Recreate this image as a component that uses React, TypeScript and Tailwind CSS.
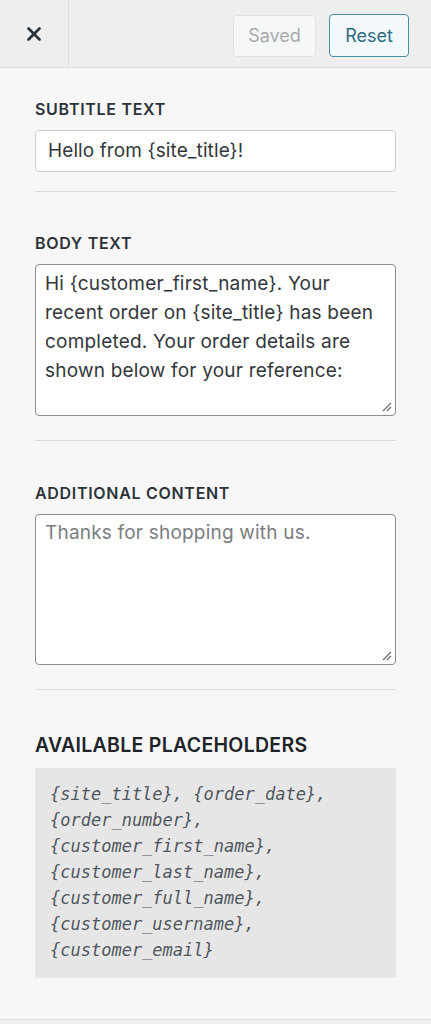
import { X } from 'lucide-react';

const placeholders = [
  '{site_title}, {order_date},',
  '{order_number},',
  '{customer_first_name},',
  '{customer_last_name},',
  '{customer_full_name},',
  '{customer_username},',
  '{customer_email}',
];

function ResizeGrip() {
  return (
    <svg
      className="absolute right-[3px] bottom-[3px] text-[#6b6e72]"
      width="10"
      height="10"
      viewBox="0 0 10 10"
      aria-hidden="true"
    >
      <path d="M1 9 L9 1 M5 9 L9 5" stroke="currentColor" strokeWidth="1.2" fill="none" />
    </svg>
  );
}

function Label({ children }: { children: React.ReactNode }) {
  return (
    <div className="h-5 text-[16px] leading-5 font-semibold tracking-[0.7px] text-[#2c3338] uppercase">
      {children}
    </div>
  );
}

function Divider() {
  return <div className="h-px bg-[#dcdcde]" />;
}

export default function App() {
  return (
    <div className="w-[431px] h-[1024px] flex flex-col bg-[#f7f7f7] font-['Inter','Liberation_Sans',sans-serif] overflow-hidden">
      {/* top bar */}
      <header className="h-[68px] shrink-0 flex items-stretch bg-[#eeeeee] border-b border-[#dddddd]">
        <button
          type="button"
          aria-label="Close"
          className="w-[69px] flex items-center justify-center border-r border-[#dddddd] text-[#2c3338]"
        >
          <X size={22} strokeWidth={3} />
        </button>
        <div className="flex-1 flex items-center justify-end gap-[13px] pr-[22px] pt-[4px]">
          <button
            type="button"
            className="w-[83px] h-[42px] rounded-[4px] border border-[#e2e2e2] bg-[#f6f7f7] text-[18px] text-[#a7aaad]"
          >
            Saved
          </button>
          <button
            type="button"
            className="w-[80px] h-[43px] rounded-[4px] border-[1.5px] border-[#4a8ca2] bg-[#f3f8fa] text-[18px] text-[#2f6c84]"
          >
            Reset
          </button>
        </div>
      </header>

      <main className="flex-1 px-[35px] pt-[31px]">
        {/* subtitle */}
        <Label>Subtitle text</Label>
        <div className="mt-[11px] h-[42px] flex items-center px-[12px] rounded-[4px] border border-[#cfcfcf] bg-white text-[19px] tracking-[0.1px] text-[#32373c]">
          Hello from {'{site_title}'}!
        </div>
        <div className="mt-[19px]">
          <Divider />
        </div>

        {/* body */}
        <div className="mt-[41px]">
          <Label>Body text</Label>
        </div>
        <div className="relative mt-[11px] h-[152px] pl-[9px] pr-[10px] py-[4px] rounded-[4px] border border-[#8c8f94] bg-white text-[19px] leading-[29px] tracking-[0.2px] text-[#32373c]">
          Hi {'{customer_first_name}'}. Your recent order on {'{site_title}'} has been completed. Your
          order details are shown below for your reference:
          <ResizeGrip />
        </div>
        <div className="mt-[24px]">
          <Divider />
        </div>

        {/* additional */}
        <div className="mt-[42px]">
          <Label>Additional content</Label>
        </div>
        <div className="relative mt-[11px] h-[151px] pl-[9px] pr-[10px] py-[3px] rounded-[4px] border border-[#8c8f94] bg-white text-[19px] leading-[29px] tracking-[0.2px] text-[#7a7d81]">
          Thanks for shopping with us.
          <ResizeGrip />
        </div>
        <div className="mt-[24px]">
          <Divider />
        </div>

        {/* placeholders */}
        <div className="mt-[43px] h-6 text-[19.5px] leading-6 font-semibold tracking-[0.3px] text-[#1d2327] uppercase">
          Available placeholders
        </div>
        <div className="mt-[11px] h-[210px] bg-[#e6e6e6] px-[15px] pt-[13px]">
          {placeholders.map((p) => (
            <div
              key={p}
              className="text-[17px] leading-[26px] italic text-[#50575e] font-['DejaVu_Sans_Mono','Liberation_Mono',monospace]"
            >
              {p}
            </div>
          ))}
        </div>
      </main>

      <div className="h-[5px] shrink-0 bg-[#eeeeee] border-t border-[#dcdcdc]" />
    </div>
  );
}
